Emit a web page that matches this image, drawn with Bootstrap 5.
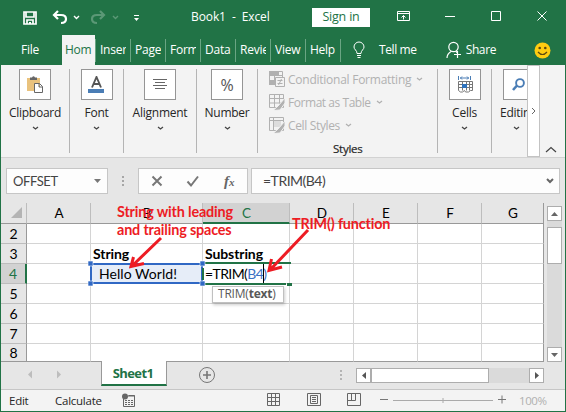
<!DOCTYPE html>
<html lang="en">
<head>
<meta charset="utf-8">
<title>Book1 - Excel</title>
<link href="https://cdn.jsdelivr.net/npm/bootstrap@5.3.0/dist/css/bootstrap.min.css" rel="stylesheet">
<style>
:root{--xl:#217346}
html,body{margin:0;height:100%;overflow:hidden}
body{font:12px/16px "Open Sans","Noto Sans",sans-serif;color:#262626;letter-spacing:-.25px}
svg{display:block;flex:none}
.win{width:566px;height:412px;border:solid var(--xl);border-width:0 1px 1px;background:#e6e6e6}
.titlebar{height:35px;background:var(--xl);padding-left:22px}
.signin{width:58px;height:19px;background:#fff;color:var(--xl);margin-left:44px;font-size:12.5px;letter-spacing:-.2px;padding-bottom:1px}
.doc{margin-left:50px;width:77px;letter-spacing:-.1px;white-space:pre;padding-bottom:1px}
.tabs{height:30px;background:var(--xl);color:#fff}
.tab-file{width:61px;padding-left:20px}
.tab-on{width:33px;height:30px;background:#f3f3f3;color:var(--xl);padding-left:3px}
.tab-x{width:35px;height:23px;border-left:1px solid #6aa583;padding-left:4px}
.tab-x span{display:block;width:26px;overflow:hidden;white-space:nowrap}
.ribbon{height:93px;background:#f3f3f3;border-bottom:1px solid #d2d2d2}
.grp{height:84px;margin-top:4px;border-right:1px solid #b4b4b4;flex:none}
.tile{width:32px;height:31px;border:1px solid #959595;background:#fff;flex:none}
.grp .cap{margin-top:5px;margin-bottom:5px;white-space:nowrap}
.dim{color:#b1b1b1;height:23px;flex:none}
.dim:first-child{margin-top:-1px}
.grp-name{margin-left:16px;font-size:11.5px;line-height:23px;-webkit-text-stroke:.2px}
.scroller{width:13px;height:92px;border:1px solid #c3c3c3;background:#fff;flex:none;z-index:1}
.fbar{height:45px;padding:10px 5px 9px;font-size:13px;color:#444}
.field{height:26px;border:1px solid #c6c6c6;background:#fdfdfd}
.calc{font-family:Lato,"Liberation Sans",sans-serif;letter-spacing:-.4px}
.sheet{width:543px;height:159px;border-collapse:separate;border-spacing:0;table-layout:fixed;background:#fff;color:#000;font:14px/16px Lato,"Liberation Sans",sans-serif;letter-spacing:-.3px}
.sheet td,.sheet th{padding:0;height:20px;border:solid #d4d4d4;border-width:0 1px 1px 0;font-weight:400;vertical-align:middle;white-space:nowrap;overflow:visible}
.sheet thead th{height:21px;background:#e6e6e6;border-color:#bdbdbd;border-bottom-color:#999;text-align:center;padding-left:1px;font-size:13.5px;letter-spacing:0}
.sheet tbody th{background:#e6e6e6;text-align:center;border-color:#999;border-bottom-color:#bdbdbd}
.sheet tr>:last-child{border-right-color:#999}
.sheet tbody tr:last-child>*{height:18px;border-bottom-color:#999}
.sheet thead th.hot{background:#d2d2d2;color:var(--xl);border-bottom:2px solid var(--xl)}
.sheet tbody th.hot{background:#d2d2d2;color:var(--xl);border-right:2px solid var(--xl)}
.sheet td b{font-weight:700;padding-left:2px;letter-spacing:-.1px}
.refcell{background:#e6edf8;padding-left:8px!important;letter-spacing:.05px}
.editcell{padding-left:2px!important;letter-spacing:-.6px}
.vtrack{width:15px;height:156px;margin:3px 0 0 3px;background:#dadada}
.sb{width:15px;height:15px;border:1px solid #adadad;background:#fff;flex:none}
.vthumb{height:37px;margin-top:6px;border:1px solid #adadad;background:#fff}
.foot{height:28px;border-bottom:1px solid #c6c6c6}
.sheet-tab{width:66px;height:25px;margin-top:-1px;padding-right:2px;background:#fff;border:solid #999;border-width:0 1px;border-bottom:2px solid var(--xl);color:var(--xl);font-weight:700;font-size:13px;letter-spacing:-.6px}
.htrack{width:188px;height:15px;background:#dadada}
.hthumb{width:118px;height:15px;border:1px solid #adadad;background:#fff}
.status{height:21px;background:#f3f3f3;font-size:11.5px}
.overlay{left:-1px;top:0;pointer-events:none}
.note{font:700 14.4px/18px Lato,"Liberation Sans",sans-serif;color:#ed1c24;white-space:nowrap}
.note-a{left:116px;top:203px;letter-spacing:-.17px}
.note-b{left:291px;top:215px;letter-spacing:-.18px}
.tip{left:211px;top:286px;width:72px;height:17px;border:1px solid #c0c0c0;background:#fff;box-shadow:1px 2px 3px #0003;color:#595959;font-size:12px;line-height:14px;letter-spacing:-.2px;padding-left:5px}
</style>
<script src="https://cdn.jsdelivr.net/npm/bootstrap@5.3.0/dist/js/bootstrap.bundle.min.js"></script>
</head>
<body>
<div class="win position-relative d-flex flex-column">
  <header class="titlebar d-flex align-items-center text-white">
    <svg width="118" height="35" fill="none" stroke="#fff">
      <path d="M1 12h12v12h-12zM3 12v5h8v-5M4 24v-4h6v4" stroke-width="1.7"/><path d="M6 22h2v2H6z" fill="#fff" stroke="none"/>
      <path d="M35 11l-4 4 4 4M31 15h7q5 0 5 4t-5 4" stroke-width="2.200"/>
      <path d="M51 16l2.500 2.500L56 16" stroke-width="1.400"/>
      <g stroke="#5b9876"><path d="M77 11l4 4-4 4M81 15h-7q-5 0-5 4t5 4" stroke-width="2.200"/><path d="M90 16l2.500 2.500L95 16" stroke-width="1.400"/></g>
      <path d="M111 15.500h5" /><path d="M111 18h5l-2.500 3z" fill="#fff" stroke="none"/>
    </svg>
    <span class="doc">Book1  -  Excel</span>
    <span class="signin d-flex align-items-center justify-content-center">Sign in</span>
    <svg class="ms-auto" width="169" height="35" fill="none" stroke="#fff">
      <path d="M1.500 11.500h12v9h-12zM1.500 13.500h12M7.500 19.500v-4M5.500 17.500l2-2 2 2M49 16.500h10M95.500 11.500h9v9h-9zM141.500 11.500l9 9M150.500 11.500l-9 9"/>
    </svg>
  </header>

  <nav class="tabs d-flex align-items-center">
    <span class="tab-file">File</span>
    <span class="tab-on d-flex align-items-center">Hom</span>
    <div class="tab-x d-flex align-items-center"><span>Inser</span></div>
    <div class="tab-x d-flex align-items-center"><span>Page</span></div>
    <div class="tab-x d-flex align-items-center"><span>Form</span></div>
    <div class="tab-x d-flex align-items-center"><span>Data</span></div>
    <div class="tab-x d-flex align-items-center"><span>Revie</span></div>
    <div class="tab-x d-flex align-items-center"><span>View</span></div>
    <div class="tab-x d-flex align-items-center"><span>Help</span></div>
    <div class="tab-x d-flex align-items-center ps-2">
      <svg class="ms-1" width="13" height="18" fill="none" stroke="#fff"><path d="M4 12.500q0-2-1.500-3.500Q1 7.500 1 6a5 5 0 0 1 10 0q0 1.500-1.500 3T8 12.500zM4 14.500h4M4.500 16.500h3"/></svg>
    </div>
    <span class="ms-1 text-nowrap" style="letter-spacing:-.4px">Tell me</span>
    <svg class="ms-auto" width="17" height="18" fill="none" stroke="#fff" stroke-width="1.200"><circle cx="7.500" cy="6" r="4.700"/><path d="M1 17q0-4 4-6.500M10 10.500l1.500 1.500M8 13.500h7M11.500 10v7"/></svg>
    <span style="margin-left:3px;letter-spacing:-.4px">Share</span>
    <svg style="margin:0 14px 0 38px" width="17" height="17"><circle cx="8.500" cy="8.500" r="8" fill="#fc1"/><circle cx="5.700" cy="6" r="1.300" fill="#5c4810"/><circle cx="11.300" cy="6" r="1.300" fill="#5c4810"/><path d="M4 10q4.500 5 9 0" fill="none" stroke="#5c4810" stroke-width="1.200"/></svg>
  </nav>

  <section class="ribbon d-flex">
    <div class="grp d-flex flex-column align-items-center" style="width:69px">
      <div class="tile d-flex align-items-center justify-content-center"><svg width="16" height="17"><path d="M0 2h13v13H0z" fill="#e9c27d"/><path d="M3 4V1.500h2Q6.500-1 8 1.500h2V4z" fill="#666"/><path d="M7.500 7.500h5l3 3v6h-8zM12 7.500v3.500h3.500" fill="#fff" stroke="#666"/></svg></div>
      <span class="cap">Clipboard</span><svg width="7" height="5" fill="none" stroke="#444"><path d="M1 1l2.500 2L6 1" stroke-width="1.300"/></svg>
    </div>
    <div class="grp d-flex flex-column align-items-center" style="width:54px">
      <div class="tile d-flex align-items-center justify-content-center"><svg width="17" height="18"><path d="M4 11.500L8.500 1 13 11.500M5.500 8h6" fill="none" stroke="#555" stroke-width="1.900"/><path d="M0 13h16v4H0z" fill="#4a7db5"/></svg></div>
      <span class="cap">Font</span><svg width="7" height="5" fill="none" stroke="#444"><path d="M1 1l2.500 2L6 1" stroke-width="1.300"/></svg>
    </div>
    <div class="grp d-flex flex-column align-items-center" style="width:73px">
      <div class="tile d-flex align-items-center justify-content-center"><svg width="14" height="11"><path d="M0 .5h14M2 3.500h10M0 6.500h14M2 9.500h10" stroke="#666"/></svg></div>
      <span class="cap">Alignment</span><svg width="7" height="5" fill="none" stroke="#444"><path d="M1 1l2.500 2L6 1" stroke-width="1.300"/></svg>
    </div>
    <div class="grp d-flex flex-column align-items-center" style="width:61px">
      <div class="tile d-flex align-items-center justify-content-center" style="color:#555;font-size:16px">%</div>
      <span class="cap">Number</span><svg width="7" height="5" fill="none" stroke="#444"><path d="M1 1l2.500 2L6 1" stroke-width="1.300"/></svg>
    </div>
    <div class="grp d-flex flex-column" style="width:180px;padding-left:11px">
      <div class="dim d-flex align-items-center"><svg width="17" height="17" fill="none" stroke="#b1b1b1"><path d="M.5.500h13v13H.5zM.5 4.500h13M.5 9.500h6M5.500.500v13M9.500.500v4"/><path d="M0 0h9v5H0zM0 9h6v5H0z" fill="#b1b1b1" stroke="none"/><path d="M6.500 6.500h9v9h-9z" fill="#f3f3f3"/><path d="M8.500 9.500h5M8.500 12.500h5M12.500 8l-3 6"/></svg><span style="margin:0 5px 0 2px">Conditional Formatting</span><svg width="7" height="5" fill="none" stroke="#b1b1b1"><path d="M1 1l2.500 2L6 1" stroke-width="1.300"/></svg></div>
      <div class="dim d-flex align-items-center"><svg width="17" height="17" fill="none" stroke="#b1b1b1"><path d="M.5.500h14v13H.5zM.5 4.500h14M.5 9h14M5.500.500v13M10.500.500v13"/><path d="M16 4L9 12l-5 4.500 7-.5 5-7z" fill="#b1b1b1" stroke="#f3f3f3"/></svg><span style="margin:0 5px 0 2px;letter-spacing:-.45px">Format as Table</span><svg width="7" height="5" fill="none" stroke="#b1b1b1"><path d="M1 1l2.500 2L6 1" stroke-width="1.300"/></svg></div>
      <div class="dim d-flex align-items-center"><svg width="17" height="17" fill="none" stroke="#b1b1b1"><path d="M4 4h8v6H4z" fill="#ddd" stroke="none"/><path d="M.5.500h14v13H.5zM.5 3.500h14M4.500.500v13"/><path d="M16 4L9 12l-5 4.500 7-.5 5-7z" fill="#b1b1b1" stroke="#f3f3f3"/></svg><span style="margin:0 5px 0 2px;letter-spacing:-.35px">Cell Styles</span><svg width="7" height="5" fill="none" stroke="#b1b1b1"><path d="M1 1l2.500 2L6 1" stroke-width="1.300"/></svg></div>
      <span class="grp-name ps-5">Styles</span>
    </div>
    <div class="grp d-flex flex-column align-items-center" style="width:54px">
      <div class="tile d-flex align-items-center justify-content-center"><svg width="16" height="17" fill="none"><path d="M1.500 0v4M13.500 0v4M3 2h9M5 .500L3.500 2 5 3.500M10 .500L11.500 2 10 3.500" stroke="#4a7db5"/><path d="M1.500 5.500h14v9h-2l-2 1.500h-3l-1-1.500-2 1.500h-2l-2-1.500zM1.500 8.500h14M1.500 11.500h14M5.500 5.500v9M9.500 5.500v9M12.500 5.500v9" stroke="#777"/><path d="M5 8h5v4H5z" fill="#2f73bd"/></svg></div>
      <span class="cap">Cells</span><svg width="7" height="5" fill="none" stroke="#444"><path d="M1 1l2.500 2L6 1" stroke-width="1.300"/></svg>
    </div>
    <div class="grp border-0 overflow-hidden" style="width:35px">
      <div class="d-flex flex-column align-items-center" style="width:54px">
        <div class="tile d-flex align-items-center justify-content-center"><svg width="16" height="14" fill="none" stroke="#4a7db5"><circle cx="9" cy="5" r="3.900" stroke-width="1.900"/><path d="M6 7.500L2 12" stroke-width="2.600"/></svg></div>
      </div>
      <div class="cap" style="margin-left:8px">Editing</div>
      <svg style="margin-left:21px" width="7" height="5" fill="none" stroke="#444"><path d="M1 1l2.500 2L6 1" stroke-width="1.300"/></svg>
    </div>
    <div class="scroller d-flex align-items-center justify-content-center"><svg width="5" height="8" fill="none" stroke="#666"><path d="M1 1l3 3-3 3"/></svg></div>
    <svg class="mt-auto mb-1" style="margin-left:5px" width="12" height="7" fill="none" stroke="#444"><path d="M1 6l5-4.500L11 6" stroke-width="1.200"/></svg>
  </section>

  <section class="fbar d-flex">
    <div class="field d-flex align-items-center justify-content-between" style="width:102px;padding:0 6px"><span class="calc">OFFSET</span><svg width="7" height="4"><path d="M0 0h7L3.500 4z" fill="#777"/></svg></div>
    <svg width="30" height="26" fill="#a6a6a6"><path d="M14 8h2v2h-2zM14 12h2v2h-2zM14 16h2v2h-2z"/></svg>
    <div class="field d-flex align-items-center" style="width:110px"><svg width="108" height="24" fill="none" stroke="#777" stroke-width="2"><path d="M13.500 7.500l9 9M22.500 7.500l-9 9M48.500 12.500l3.500 4 7-9"/><text x="85" y="17" font-family="Liberation Serif" font-style="italic" font-weight="700" font-size="15" letter-spacing="0" fill="#666" stroke="none">f<tspan font-size="11">x</tspan></text></svg></div>
    <div class="field d-flex align-items-center justify-content-between flex-fill" style="margin-left:3px;padding:0 5px 0 11px"><span class="calc" style="font-size:14px;letter-spacing:-.5px">=TRIM(B4)</span><svg width="8" height="6" fill="none" stroke="#666"><path d="M1 1l3 3 3-3" stroke-width="2"/></svg></div>
  </section>

  <main class="d-flex">
    <table class="sheet">
      <colgroup><col style="width:26px"><col style="width:64px"><col style="width:112px"><col style="width:87px"><col style="width:64px"><col style="width:64px"><col style="width:64px"><col style="width:62px"></colgroup>
      <thead><tr><th><svg class="ms-auto me-1" width="11" height="12"><path d="M11 0v11H0z" fill="#b4b4b4"/></svg></th><th>A</th><th>B</th><th class="hot">C</th><th>D</th><th>E</th><th>F</th><th>G</th></tr></thead>
      <tbody>
        <tr><th>2</th><td></td><td></td><td></td><td></td><td></td><td></td><td></td></tr>
        <tr><th>3</th><td></td><td><b>String</b></td><td><b>Substring</b></td><td></td><td></td><td></td><td></td></tr>
        <tr><th class="hot">4</th><td></td><td class="refcell">Hello World!</td><td class="editcell">=TRIM(<span style="color:#3a72c4">B4)</span></td><td></td><td></td><td></td><td></td></tr>
        <tr><th>5</th><td></td><td></td><td></td><td></td><td></td><td></td><td></td></tr>
        <tr><th>6</th><td></td><td></td><td></td><td></td><td></td><td></td><td></td></tr>
        <tr><th>7</th><td></td><td></td><td></td><td></td><td></td><td></td><td></td></tr>
        <tr><th>8</th><td></td><td></td><td></td><td></td><td></td><td></td><td></td></tr>
      </tbody>
    </table>
    <div class="vtrack d-flex flex-column">
      <div class="sb d-flex align-items-center justify-content-center"><svg width="7" height="4"><path d="M0 4h7L3.500 0z" fill="#666"/></svg></div>
      <div class="vthumb"></div>
      <div class="sb mt-auto d-flex align-items-center justify-content-center"><svg width="7" height="4"><path d="M0 0h7L3.500 4z" fill="#666"/></svg></div>
    </div>
  </main>

  <section class="foot d-flex">
    <svg width="100" height="27" fill="#bdbdbd"><path d="M31 8.500v8L27 12.500zM56 8.500v8l4-4z"/></svg>
    <div class="sheet-tab d-flex align-items-center justify-content-center">Sheet1</div>
    <svg width="80" height="27" fill="none" stroke="#777"><circle cx="40" cy="13" r="7.500"/><path d="M36 13h8M40 9v8" stroke-width="1.600"/></svg>
    <svg class="ms-auto" width="6" height="27" fill="#b4b4b4"><path d="M1 8h2v2H1zM1 12h2v2H1zM1 16h2v2H1z"/></svg>
    <div class="htrack d-flex" style="margin:6px 21px 0 11px">
      <div class="sb d-flex align-items-center justify-content-center"><svg width="4" height="7"><path d="M4 0v7L0 3.500z" fill="#555"/></svg></div>
      <div class="hthumb"></div>
      <div class="sb ms-auto d-flex align-items-center justify-content-center"><svg width="4" height="7"><path d="M0 0v7l4-3.500z" fill="#555"/></svg></div>
    </div>
  </section>

  <footer class="status d-flex align-items-center">
    <span style="width:46px;padding-left:8px">Edit</span>
    <span style="width:75px;padding-left:8px">Calculate</span>
    <svg width="14" height="15" fill="none" stroke="#666"><path d="M1.500 5.500v8h11v-11h-6"/><path d="M6 3h7M3 7.500h2M6 7.500h2M9 7.500h2M3 9.500h2M6 9.500h2M9 9.500h2M3 11.500h2M6 11.500h2M9 11.500h2"/><circle cx="3" cy="3.500" r="3" fill="#666" stroke="none"/></svg>
    <svg class="ms-auto" width="245" height="21" fill="none" stroke="#666">
      <path d="M1.500 3.500h12v12h-12zM1.500 7.500h12M1.500 11.500h12M5.500 3.500v12M9.500 3.500v12"/>
      <path d="M41.500 3.500h13v12h-13zM44.500 5.500h7v8h-7zM46 7.500h4M46 9.500h4M46 11.500h4"/>
      <path d="M81.500 3.500h13v12h-13zM81.500 10.500h8v-7M85.500 3.500v7"/>
      <path d="M114 9.500h8M232 9.500h8M236 5.500v8" stroke="#777"/><path d="M127 10.500h100M177 8v5" stroke="#aaa"/>
    </svg>
    <span style="color:#b0b0b0;margin:0 18px 0 8px;width:28px;letter-spacing:-.4px">100%</span>
  </footer>

  <!-- selection frames and callouts lying over the grid -->
  <svg class="overlay position-absolute" width="566" height="412" fill="none">
    <path d="M91 264h111v19H91z" stroke="#3068c4" stroke-width="2"/>
    <path d="M204 263h87M204 284h82" stroke="#217346" stroke-width="2"/><path d="M203 268v12" stroke="#217346" stroke-width="2"/>
    <path d="M287 283h5v3h-5z" fill="#217346"/>
    <path d="M88 261h5v5h-5zM200 261h5v5h-5zM88 281h5v5h-5zM200 281h5v5h-5z" fill="#3068c4" stroke="#fff" stroke-width=".6"/>
    <path d="M263.500 264v19" stroke="#000"/>
    <g stroke="#ed1c24" stroke-width="3"><path d="M161 238L132 266M133.500 257L131 266.500 144 263.500M308 230L270 270M271.500 259L269 270.500 282 267"/></g>
  </svg>
  <div class="note note-a position-absolute">String with leading<br>and trailing spaces</div>
  <div class="note note-b position-absolute">TRIM() function</div>
  <div class="tip position-absolute">TRIM(<b>text</b>)</div>
</div>
</body>
</html>
